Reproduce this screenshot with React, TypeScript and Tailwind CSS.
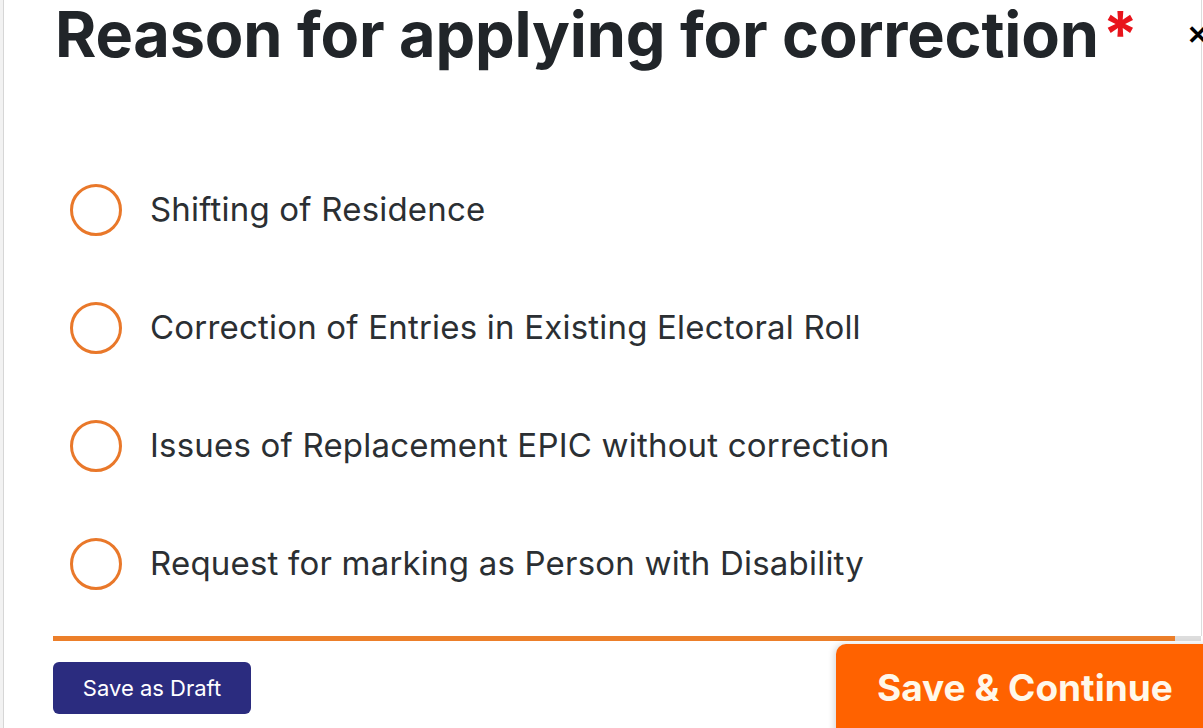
import React from "react";

const options = [
  "Shifting of Residence",
  "Correction of Entries in Existing Electoral Roll",
  "Issues of Replacement EPIC without correction",
  "Request for marking as Person with Disability",
];

export default function App() {
  return (
    <div className="relative w-[1203px] h-[728px] overflow-hidden bg-white font-['Inter','Noto_Sans',sans-serif]">
      {/* left edge */}
      <div className="absolute left-0 top-0 h-full w-[4px] bg-[#f2f2f2] border-r border-[#d6d6d6]" />
      {/* right edge */}
      <div className="absolute right-[1px] top-0 h-[636px] w-[1px] bg-[#dcdcdc]" />
      {/* close x */}
      <div className="absolute left-[1187px] top-[22px] text-[26px] font-black leading-none text-black">✕</div>

      <div className="flex flex-col pl-[55px]">
        <h1 className="text-[63px] font-bold leading-[68px] tracking-[-0.2px] text-[#212529] whitespace-nowrap">
          Reason for applying for correction<span className="text-[#e8141c] ml-[4px]">*</span>
        </h1>

        <div className="mt-[116px] flex flex-col gap-[66px] pl-[15px]">
          {options.map((o) => (
            <div key={o} className="flex items-center h-[52px]">
              <div className="w-[52px] h-[52px] rounded-full border-[3px] border-[#e9782a] shrink-0" />
              <span className="ml-[28px] text-[33px] text-[#2b2f33] tracking-[0.2px] whitespace-nowrap">{o}</span>
            </div>
          ))}
        </div>
      </div>

      {/* divider */}
      <div className="absolute left-[53px] top-[636px] flex h-[5px] w-[1148px]">
        <div className="h-full flex-1 bg-[#ec7f2a]" />
        <div className="h-full w-[26px] bg-[#dddddd]" />
      </div>

      <div className="absolute left-[53px] top-[662px] flex h-[52px] w-[198px] items-center justify-center rounded-[6px] bg-[#2b2c7f] text-[22px] text-white">
        Save as Draft
      </div>

      <div className="absolute left-[836px] top-[644px] flex h-[100px] w-[380px] items-start rounded-tl-[10px] bg-[#ff6200] pl-[41px] pt-[16px] text-[37px] font-bold text-[#fff8ea] shadow-[-2px_0_6px_rgba(0,0,0,0.15)]">
        Save &amp; Continue
      </div>
    </div>
  );
}
